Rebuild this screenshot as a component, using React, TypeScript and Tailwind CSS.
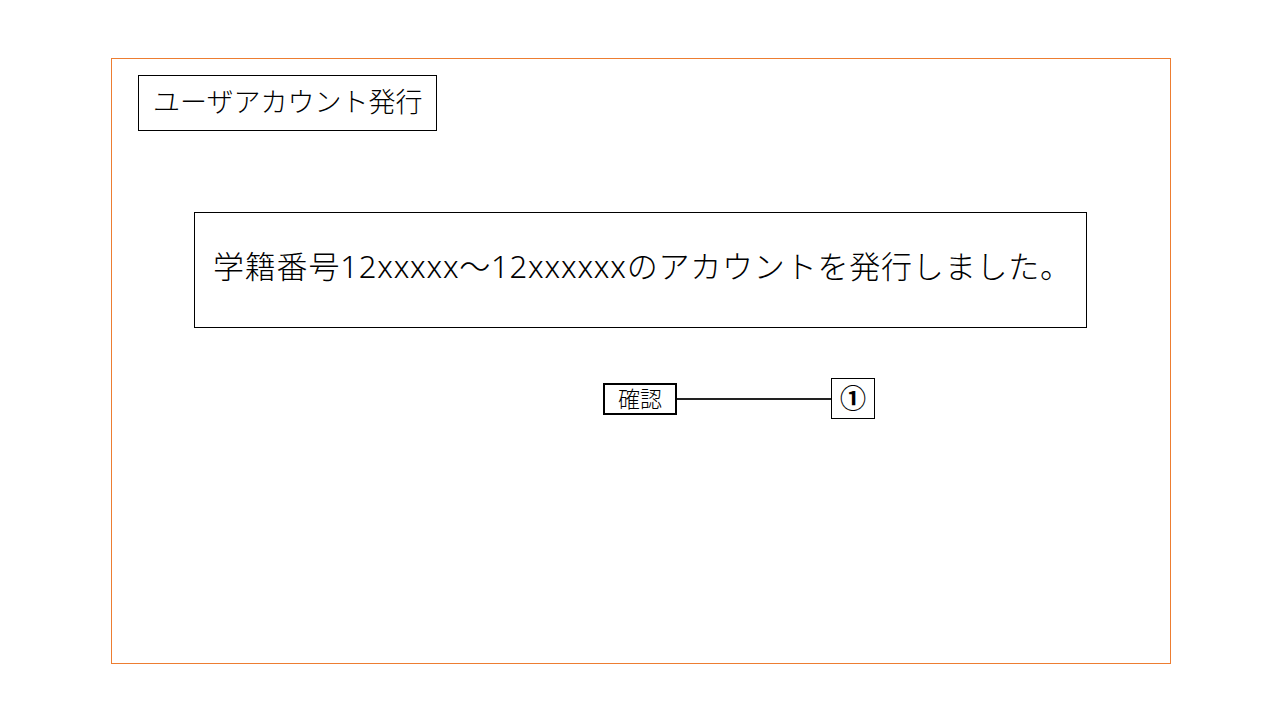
export default function App() {
  const jp = { fontFamily: '"Noto Sans CJK JP", "Noto Sans", sans-serif' }
  const mixed = { fontFamily: '"Noto Sans", "Noto Sans CJK JP", sans-serif' }

  return (
    <div className="w-[1280px] h-[720px] bg-white overflow-hidden" style={jp}>
      {/* Screen frame */}
      <div className="ml-[111px] mt-[58px] w-[1060px] h-[606px] border border-[#ed7d31] flex flex-col">
        {/* Title */}
        <div className="ml-[26px] mt-[16px] w-[299px] h-[56px] border border-black flex items-center pl-[14px] pb-[5px]">
          <span className="text-[27px] font-light leading-none text-black">ユーザアカウント発行</span>
        </div>

        {/* Message */}
        <div className="ml-[82px] mt-[81px] w-[893px] h-[116px] border border-black flex items-center pl-[18px] pb-[8px]">
          <span className="text-[31px] font-light leading-none tracking-[0.8px] text-black whitespace-nowrap" style={mixed}>
            学籍番号12xxxxx～12xxxxxxのアカウントを発行しました。
          </span>
        </div>

        {/* Confirm button with annotation */}
        <div className="ml-[491px] mt-[50px] flex items-center">
          <div className="w-[74px] h-[32px] border-2 border-black flex items-center justify-center pb-[3px]">
            <span className="text-[22px] font-light leading-none text-black">確認</span>
          </div>
          <div className="w-[154px] h-[2px] bg-[#222]" />
          <div className="w-[44px] h-[41px] border border-black flex items-center justify-center pb-[3px]">
            <span className="text-[26px] font-bold leading-none text-black">①</span>
          </div>
        </div>
      </div>
    </div>
  )
}
